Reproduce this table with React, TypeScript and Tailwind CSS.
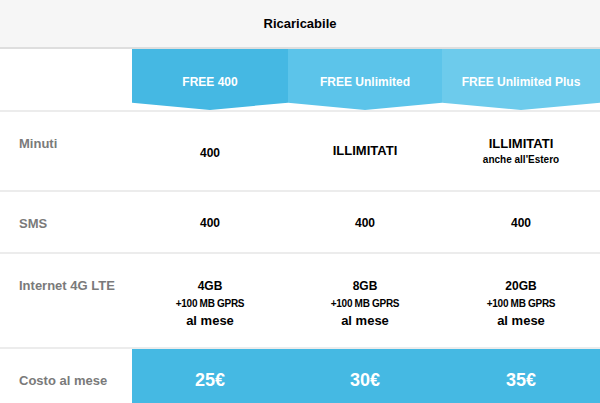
import React from "react";

const plans = [
  { name: "FREE 400", bg: "bg-[#45b8e3]" },
  { name: "FREE Unlimited", bg: "bg-[#5cc4ea]" },
  { name: "FREE Unlimited Plus", bg: "bg-[#6dcbec]" },
];

const grid = "grid grid-cols-[132px_156px_154px_158px]";

function Label({ children }: { children: React.ReactNode }) {
  return (
    <div className="pl-[19px] pt-[24px] text-[13px] leading-[16px] font-bold text-[#7a7a7a]">
      {children}
    </div>
  );
}

function Val({ children }: { children: React.ReactNode }) {
  return (
    <div className="flex flex-col items-center justify-center text-center text-black font-bold">
      {children}
    </div>
  );
}

function Sep() {
  return <div className="h-[2px] bg-[#ececec]" />;
}

export default function App() {
  return (
    <div
      className="w-[600px] h-[403px] overflow-hidden bg-white"
      style={{ fontFamily: '"Liberation Sans", Arial, sans-serif' }}
    >
      <div className="h-[47px] bg-[#f6f6f6] flex items-center justify-center text-[13px] font-bold text-black">
        Ricaricabile
      </div>
      <div className="h-[2px] bg-[#dedede]" />
      <div className={`${grid} h-[61px]`}>
        <div />
        {plans.map((p) => (
          <div
            key={p.name}
            className={`${p.bg} [clip-path:polygon(0_0,100%_0,100%_88%,50%_100%,0_88%)] flex items-center justify-center pt-[4px] text-white text-[12px] font-bold`}
          >
            {p.name}
          </div>
        ))}
      </div>
      <Sep />
      <div className={`${grid} h-[78px]`}>
        <Label>Minuti</Label>
        <Val>
          <span className="text-[12px] leading-[16px] pt-[3px]">400</span>
        </Val>
        <Val>
          <span className="text-[13px] leading-[16px]">ILLIMITATI</span>
        </Val>
        <Val>
          <span className="text-[13px] leading-[18px]">ILLIMITATI</span>
          <span className="text-[10px] leading-[14px]">anche all'Estero</span>
        </Val>
      </div>
      <Sep />
      <div className={`${grid} h-[60px]`}>
        <Label>SMS</Label>
        {[0, 1, 2].map((i) => (
          <Val key={i}>
            <span className="text-[12px] leading-[16px] pt-[2px]">400</span>
          </Val>
        ))}
      </div>
      <Sep />
      <div className={`${grid} h-[93px]`}>
        <Label>Internet 4G LTE</Label>
        {["4GB", "8GB", "20GB"].map((g) => (
          <Val key={g}>
            <div className="flex flex-col items-center pt-[5px]">
              <span className="text-[12px] leading-[17px]">{g}</span>
              <span className="text-[10px] leading-[17px] tracking-[-0.3px]">+100 MB GPRS</span>
              <span className="text-[13px] leading-[17px]">al mese</span>
            </div>
          </Val>
        ))}
      </div>
      <Sep />
      <div className={`${grid} h-[62px]`}>
        <Label>Costo al mese</Label>
        {["25€", "30€", "35€"].map((p) => (
          <div
            key={p}
            className="bg-[#45b9e3] flex items-center justify-center text-white text-[18px] font-bold"
          >
            {p}
          </div>
        ))}
      </div>
    </div>
  );
}
